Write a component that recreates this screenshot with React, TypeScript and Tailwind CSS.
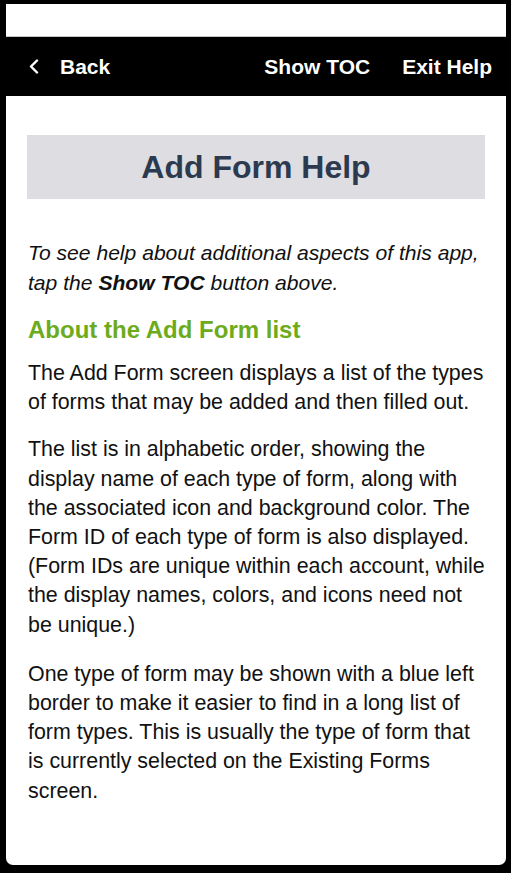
export default function App() {
  const font = { fontFamily: '"Liberation Sans", Arial, Helvetica, sans-serif' };
  return (
    <div
      className="w-[511px] h-[873px] bg-black pt-[4px] pl-[6px] pr-[5px] pb-[8px] flex flex-col"
      style={font}
    >
      <div className="h-[33px] bg-white border-b border-[#c4c4c4] shrink-0" />
      <div className="h-[59px] bg-black shrink-0 flex items-center text-white font-bold text-[21px] pl-[23px] pr-[14px]">
        <svg width="10" height="15" viewBox="0 0 10 15" className="mr-[21px]">
          <polyline points="8,1.5 2,7.5 8,13.5" fill="none" stroke="white" strokeWidth="2.4" strokeLinecap="round" strokeLinejoin="round" />
        </svg>
        <span>Back</span>
        <span className="ml-auto">Show TOC</span>
        <span className="ml-[32px]">Exit Help</span>
      </div>
      <div className="flex-1 bg-white rounded-b-[7px] px-[21px] pt-[39px] text-[#111] text-[21.4px]">
        <div className="h-[64px] bg-[#dedde1] flex items-center justify-center">
          <h1 className="text-[32px] font-bold text-[#2c3a50]">Add Form Help</h1>
        </div>
        <p className="italic text-[21.1px] leading-[30px] mt-[39px] pl-[1px] -mr-[2px]">
          To see help about additional aspects of this app, tap the <b>Show TOC</b> button above.
        </p>
        <h2 className="text-[24px] font-bold text-[#6cab1c] leading-[30px] mt-[17px] pl-[1px]">
          About the Add Form list
        </h2>
        <p className="leading-[29.2px] mt-[14px] pl-[1px]">
          The Add Form screen displays a list of the types of forms that may be added and then filled out.
        </p>
        <p className="leading-[29.2px] mt-[18px] pl-[1px]">
          The list is in alphabetic order, showing the display name of each type of form, along with the associated icon and background color. The Form ID of each type of form is also displayed. (Form IDs are unique within each account, while the display names, colors, and icons need not be unique.)
        </p>
        <p className="leading-[29.2px] mt-[20px] pl-[1px]">
          One type of form may be shown with a blue left border to make it easier to find in a long list of form types. This is usually the type of form that is currently selected on the Existing Forms screen.
        </p>
      </div>
    </div>
  );
}
